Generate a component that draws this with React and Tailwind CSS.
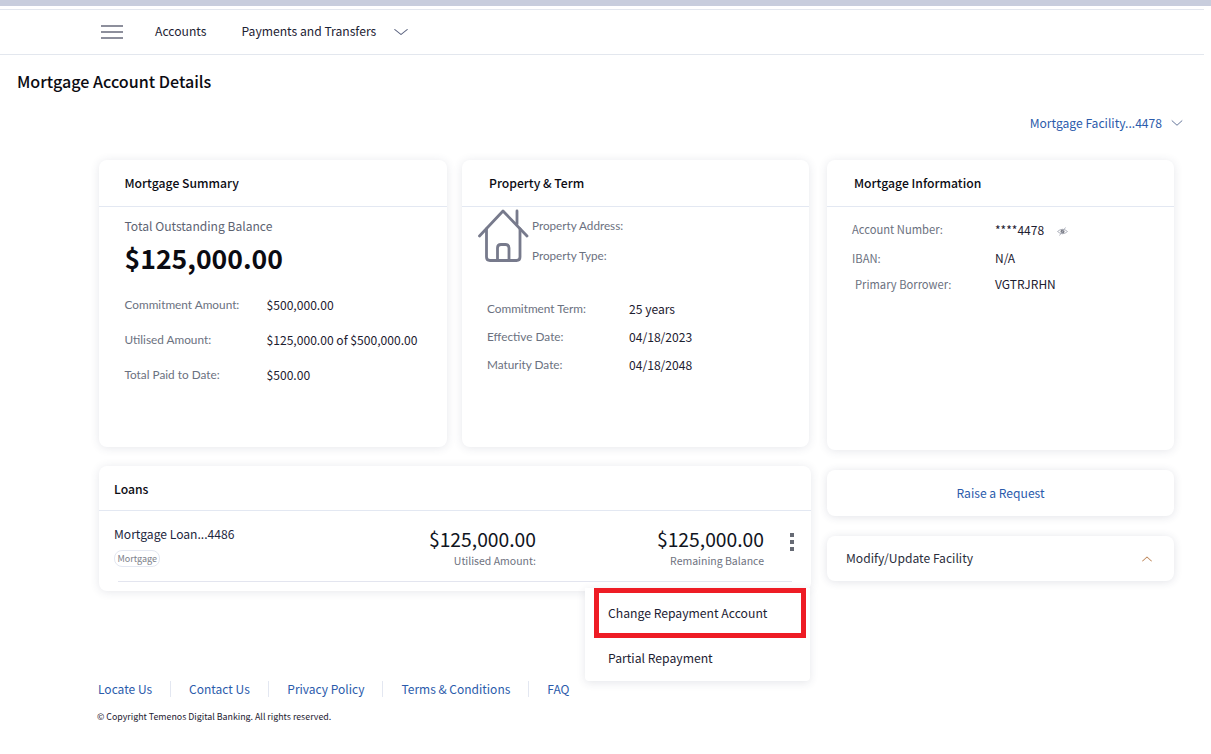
import { ChevronDown, ChevronUp } from 'lucide-react';

const FONT = "font-['Noto_Sans_CJK_SC','Liberation_Sans',sans-serif]";

function Card({ title, titleClass, className, children }) {
  return (
    <div className={`bg-white rounded-lg shadow-[0_1px_10px_rgba(50,60,90,0.12)] ${className}`}>
      <div className={`h-[47px] flex items-center border-b border-[#e3e8f2] text-[12.2px] font-medium text-[#0c0c14] ${titleClass}`}>
        {title}
      </div>
      {children}
    </div>
  );
}

function Row({ label, value, className }) {
  return (
    <div className={`flex items-center leading-[18px] ${className}`}>
      <span className="w-[142px] text-[11.8px] text-[#6b7180] font-['Lato',sans-serif]">{label}</span>
      <span className="text-[12.1px] text-[#1d2030]">{value}</span>
    </div>
  );
}

function HouseIcon() {
  return (
    <svg width="52" height="54" viewBox="0 0 52 54" fill="none" stroke="#777a8c" strokeWidth="2.8" strokeLinecap="round" strokeLinejoin="round">
      <path d="M1.5 27 L25 2 L49 27" />
      <path d="M39 2 V15" />
      <path d="M8.5 20 V48 Q8.5 51.5 12 51.5 H38.5 Q42 51.5 42 48 V20" />
      <path d="M19.5 51.5 V39 Q19.5 35.5 23 35.5 H27.5 Q31 35.5 31 39 V51.5" />
    </svg>
  );
}

function EyeSlash() {
  return (
    <svg width="11" height="11" viewBox="0 0 11 11" fill="none" className="mt-[3px]">
      <path d="M0.5 5.5 Q5.5 1 10.5 5.5 Q5.5 10 0.5 5.5 Z" stroke="#a9adb8" strokeWidth="0.9" />
      <circle cx="5.5" cy="5.5" r="2" fill="#7d7f88" />
      <path d="M2.5 9.5 L8.5 1.5" stroke="#a9adb8" strokeWidth="0.9" />
    </svg>
  );
}

export default function App() {
  return (
    <div className={`${FONT} w-[1211px] h-[754px] bg-white overflow-hidden text-[#111]`}>
      <div className="h-[6px] bg-[#c8cddd]" />
      <div className="h-[3px] bg-white" />
      <nav className="h-[46px] mr-[7px] border-y border-[#e3e7ee] flex items-center pl-[101px] text-[12.15px] text-[#1d2233]">
        <div className="w-[22px] flex flex-col gap-[4px] mr-[32px]">
          <span className="h-[2px] bg-[#8d8f9c]" />
          <span className="h-[2px] bg-[#8d8f9c]" />
          <span className="h-[2px] bg-[#8d8f9c]" />
        </div>
        <span className="mr-[35px] mb-[2px]">Accounts</span>
        <span className="mr-[15px] mb-[2px]">Payments and Transfers</span>
        <ChevronDown size={20} strokeWidth={1.2} className="text-[#5c6480] scale-x-125" />
      </nav>

      <h1 className="pl-[17px] mt-[13px] text-[16.1px] leading-[26px] font-medium text-[#0b0b12]">Mortgage Account Details</h1>

      <div className="flex justify-end items-center pr-[25px] mt-[19px] h-[20px] text-[12.1px] text-[#2b5bab]">
        <span className="mr-[6px]">Mortgage Facility...4478</span>
        <ChevronDown size={18} strokeWidth={1.2} className="text-[#5c6f95] scale-x-110" />
      </div>

      <div className="flex pl-[99px] mt-[27px]">
        <div className="w-[712px] shrink-0">
          <div className="flex gap-[15px] w-[710px]">
            <Card title="Mortgage Summary" titleClass="pl-[25.5px]" className="w-[348px] h-[287px]">
              <div className="pl-[25.5px] pt-[10px]">
                <div className="text-[12.1px] leading-[18px] text-[#5d6372]">Total Outstanding Balance</div>
                <div className="text-[26.6px] leading-[40px] mt-[3px] font-semibold text-[#0b0b12]">$125,000.00</div>
                <Row label="Commitment Amount:" value="$500,000.00" className="mt-[18px]" />
                <Row label="Utilised Amount:" value="$125,000.00 of $500,000.00" className="mt-[17px]" />
                <Row label="Total Paid to Date:" value="$500.00" className="mt-[17px]" />
              </div>
            </Card>
            <Card title="Property & Term" titleClass="pl-[27px]" className="w-[347px] h-[287px]">
              <div className="flex pl-[16px] pt-[2px]">
                <HouseIcon />
                <div className="pl-[2px] pt-[7px] text-[11.7px] leading-[18px] text-[#6b7180] font-['Lato',sans-serif]">
                  <div>Property Address:</div>
                  <div className="mt-[12px]">Property Type:</div>
                </div>
              </div>
              <div className="pl-[25px] mt-[36px]">
                <Row label="Commitment Term:" value="25 years" />
                <Row label="Effective Date:" value="04/18/2023" className="mt-[10px]" />
                <Row label="Maturity Date:" value="04/18/2048" className="mt-[10px]" />
              </div>
            </Card>
          </div>

          <div className="relative mt-[19px]">
            <div className="bg-white rounded-lg shadow-[0_1px_10px_rgba(50,60,90,0.12)] h-[125px]">
              <div className="h-[45px] pl-[15px] pt-[2px] flex items-center border-b border-[#e3e8f2] text-[12.2px] font-medium text-[#0c0c14]">
                Loans
              </div>
              <div className="mx-[19px] h-[71px] border-b border-[#e3e5ef] flex">
                <div className="ml-[-4px] w-[232px] shrink-0 pt-[14px]">
                  <div className="text-[12.1px] leading-[18px] text-[#1d2740]">Mortgage Loan...4486</div>
                  <span className="inline-flex items-center h-[17px] mt-[6px] px-[2.5px] rounded-lg border border-[#e3e7f1] text-[9px] text-[#7c8089]">Mortgage</span>
                </div>
                <div className="w-[190px] shrink-0 pt-[15px] text-right">
                  <div className="text-[19.3px] leading-[27px] text-[#111522]">$125,000.00</div>
                  <div className="text-[10.5px] leading-[16px] text-[#6e7280]">Utilised Amount:</div>
                </div>
                <div className="w-[228px] shrink-0 pt-[15px] text-right">
                  <div className="text-[19.3px] leading-[27px] text-[#111522]">$125,000.00</div>
                  <div className="text-[10.5px] leading-[16px] text-[#6e7280]">Remaining Balance</div>
                </div>
                <div className="ml-[26px] shrink-0 pt-[22px] flex flex-col gap-[3px]">
                  <span className="w-[4px] h-[4px] bg-[#666a74]" />
                  <span className="w-[4px] h-[4px] bg-[#666a74]" />
                  <span className="w-[4px] h-[4px] bg-[#666a74]" />
                </div>
              </div>
            </div>

            <div className="absolute left-[486px] top-[122px] w-[225px] h-[93px] bg-white rounded-b shadow-[0_2px_8px_rgba(50,60,90,0.12)] text-[12.2px] text-[#1d2233]">
              <div className="ml-[9px] w-[212px] h-[50px] border-[5px] border-[#ee1c25] flex items-center pl-[9px]">
                Change Repayment Account
              </div>
              <div className="pl-[23px] mt-[10px] leading-[20px]">Partial Repayment</div>
            </div>
          </div>
        </div>

        <div className="w-[347px] ml-[16px] shrink-0">
          <Card title="Mortgage Information" titleClass="pl-[27px]" className="h-[290px]">
            <div className="pl-[25px] pt-[14px] text-[12px]">
              <div className="flex items-center h-[18px]">
                <span className="w-[143px] mb-[1px] text-[11.2px] text-[#6b7180]">Account Number:</span>
                <span className="text-[#1d2030] w-[62px]">****4478</span>
                <EyeSlash />
              </div>
              <div className="flex items-center h-[18px] mt-[10px]">
                <span className="w-[143px] text-[11.2px] text-[#6b7180]">IBAN:</span>
                <span className="text-[#1d2030]">N/A</span>
              </div>
              <div className="flex items-center h-[18px] mt-[8px]">
                <span className="w-[143px] pl-[3px] text-[11.2px] text-[#6b7180]">Primary Borrower:</span>
                <span className="text-[#1d2030]">VGTRJRHN</span>
              </div>
            </div>
          </Card>
          <div className="mt-[20px] h-[46px] bg-white rounded-lg shadow-[0_1px_8px_rgba(50,60,90,0.14)] flex items-center justify-center text-[12.1px] text-[#2b5bab]">
            Raise a Request
          </div>
          <div className="mt-[20px] h-[45px] bg-white rounded-lg shadow-[0_1px_8px_rgba(50,60,90,0.14)] flex items-center justify-between pl-[19px] pr-[19px] text-[12.1px] text-[#2a2e3c]">
            Modify/Update Facility
            <ChevronUp size={16} strokeWidth={1.4} className="text-[#c08a5e] scale-x-110" />
          </div>
        </div>
      </div>

      <div className="pl-[98px] mt-[90px]">
        <div className="flex items-center text-[12px] leading-[16px] text-[#2b5bab]">
          <span className="pr-[18px] border-r border-[#e3e7f1]">Locate Us</span>
          <span className="px-[18px] border-r border-[#e3e7f1]">Contact Us</span>
          <span className="pl-[18.5px] pr-[18px] border-r border-[#e3e7f1]">Privacy Policy</span>
          <span className="px-[18px] border-r border-[#e3e7f1]">Terms &amp; Conditions</span>
          <span className="pl-[18px]">FAQ</span>
        </div>
        <div className="mt-[13px] -ml-px text-[8.83px] leading-[14px] text-[#1d2030]">© Copyright Temenos Digital Banking. All rights reserved.</div>
      </div>
    </div>
  );
}
